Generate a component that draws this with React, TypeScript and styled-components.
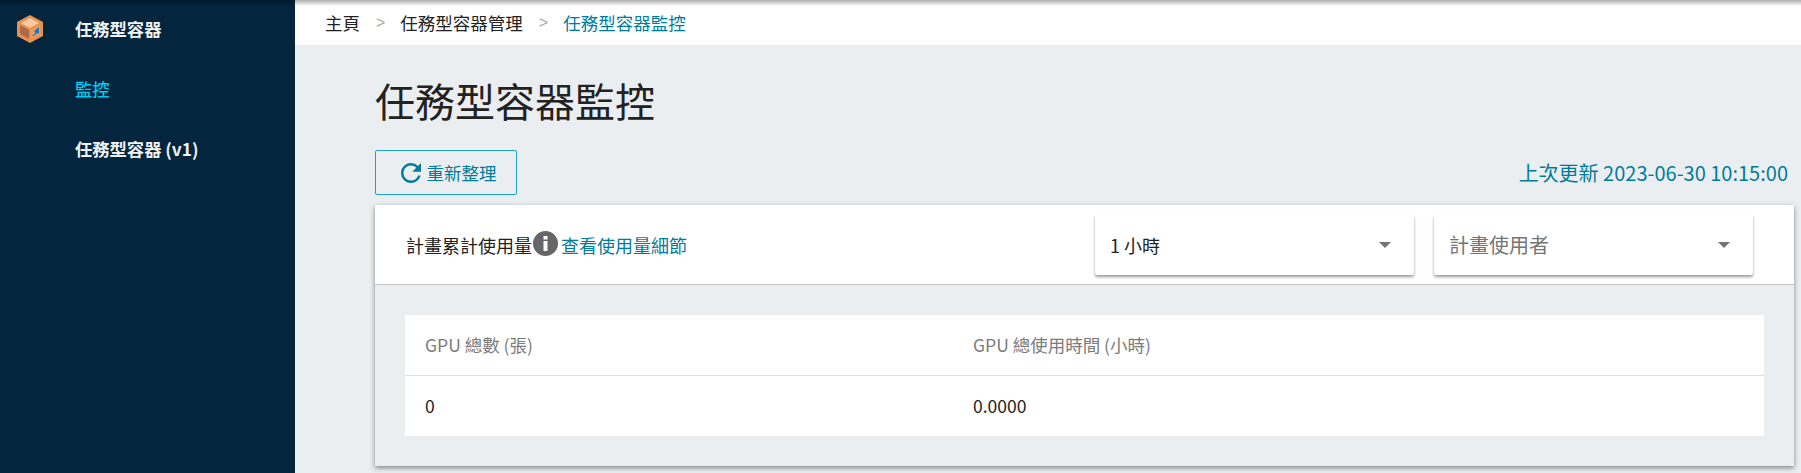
import styled, { createGlobalStyle } from "styled-components";
import { MdRefresh } from "react-icons/md";

const GlobalStyle = createGlobalStyle`
  html, body {
    margin: 0;
    height: 100%;
    overflow: hidden;
    background: #ebeef1;
    font-family: "Noto Sans CJK TC", "Noto Sans", sans-serif;
  }
  * {
    box-sizing: border-box;
  }
`;

const Shell = styled.div`
  position: relative;
  display: flex;
  width: 1801px;
  height: 473px;
  overflow: hidden;
`;

// 頂部陰影
const TopShade = styled.div`
  position: absolute;
  top: 0;
  left: 0;
  right: 0;
  height: 6px;
  background: linear-gradient(rgba(0, 0, 0, 0.32), rgba(0, 0, 0, 0));
`;

const Sidebar = styled.aside`
  flex: none;
  display: grid;
  grid-template-columns: 75px 1fr;
  grid-auto-rows: 60px;
  align-content: start;
  width: 295px;
  padding-top: 4px;
  background: #03253d;
`;

const LogoCell = styled.div`
  grid-row: 1;
  padding: 10px 0 0 16px;
`;

const SideItem = styled.a<{ $active?: boolean }>`
  grid-column: 2;
  line-height: 50px;
  font-size: 17.3px;
  font-weight: ${(p) => (p.$active ? 500 : 700)};
  color: ${(p) => (p.$active ? "#00c8f0" : "#f0f2f4")};
`;

const Main = styled.main`
  flex: 1;
  min-width: 0;
`;

const Breadcrumb = styled.nav`
  display: flex;
  align-items: center;
  height: 45px;
  padding-left: 30px;
  background: #ffffff;
  font-size: 17.5px;
  color: #222222;
`;

const Crumb = styled.span<{ $current?: boolean }>`
  color: ${(p) => (p.$current ? "#007c9b" : "#222222")};
`;

const CrumbSep = styled.span`
  margin: 0 15px 0 16px;
  color: #a5a5a5;
  font-family: "Liberation Sans", sans-serif;
  font-size: 16px;
`;

const Content = styled.div`
  padding: 30px 7px 0 80px;
`;

const Title = styled.h1`
  margin: 0;
  height: 75px;
  font-size: 40px;
  font-weight: 400;
  line-height: 50px;
  color: #222222;
`;

const Toolbar = styled.div`
  display: flex;
  justify-content: space-between;
  align-items: center;
  height: 45px;
  margin-bottom: 10px;
`;

const RefreshButton = styled.button`
  display: flex;
  justify-content: center;
  align-items: center;
  gap: 1px;
  width: 142px;
  height: 45px;
  padding: 0;
  border: 1px solid #1ba3bf;
  border-radius: 2px;
  background: transparent;
  font: inherit;
  font-size: 17.5px;
  color: #007c9b;
`;

const Updated = styled.div`
  padding-right: 6px;
  font-size: 20px;
  color: #007c9b;
`;

const Card = styled.section`
  height: 261px;
  background: #ebeef1;
  box-shadow: 0 2px 5px rgba(0, 0, 0, 0.45);
`;

const CardHead = styled.header`
  display: flex;
  align-items: center;
  height: 80px;
  padding: 0 41px 0 31px;
  background: #ffffff;
  border-bottom: 1px solid #c4c4c4;
  font-size: 18px;
  color: #222222;
`;

const InfoIcon = styled.svg`
  flex: none;
  margin: -3px 3px 0 1px;
`;

const DetailLink = styled.a`
  flex: 1;
  color: #007c9b;
`;

const Select = styled.div<{ $gap?: boolean }>`
  display: flex;
  justify-content: space-between;
  align-items: center;
  width: 319px;
  height: 60px;
  margin-left: ${(p) => (p.$gap ? "20px" : "0")};
  padding: 0 15px;
  border-radius: 2px;
  background: #ffffff;
  box-shadow: 0 2px 3px rgba(0, 0, 0, 0.4);
`;

const SelectText = styled.span<{ $placeholder?: boolean }>`
  font-size: ${(p) => (p.$placeholder ? "20px" : "18px")};
  color: ${(p) => (p.$placeholder ? "#757575" : "#222222")};
`;

const Caret = styled.span`
  width: 0;
  height: 0;
  margin-right: 8px;
  border-left: 6px solid transparent;
  border-right: 6px solid transparent;
  border-top: 6px solid #757575;
`;

const CardBody = styled.div`
  padding: 30px;
`;

const Table = styled.div`
  display: grid;
  grid-template-columns: 548px 1fr;
  background: #ffffff;
`;

const HeadCell = styled.div`
  height: 61px;
  padding: 0 20px;
  border-bottom: 1px solid #dddddd;
  font-size: 17.5px;
  line-height: 59px;
  color: #7b7b7b;
`;

const Cell = styled.div`
  height: 60px;
  padding: 0 20px;
  font-size: 17.5px;
  line-height: 60px;
  color: #222222;
`;

const BoxLogo = () => (
  <svg width="28" height="29" viewBox="0 0 28 29">
    <path d="M14 1 27 8v14l-13 7L1 22V8z" fill="#e8924f" />
    <path d="M14 4 23 9l-9 5-9-5z" fill="#fbc9a0" />
    <path d="M4 11l9 5v9l-9-5z" fill="#a96a45" />
    <path d="M15 16l9-5v9l-9 5z" fill="#ee9d5e" />
    <path d="M16 21l3-1v-3l-2 1 6-5v7l-2-1-3 3-2-1z" fill="#1277d0" />
  </svg>
);

const App = () => (
  <>
    <GlobalStyle />
    <Shell>
      <Sidebar>
        <LogoCell>
          <BoxLogo />
        </LogoCell>
        <SideItem>任務型容器</SideItem>
        <SideItem $active>監控</SideItem>
        <SideItem>任務型容器 (v1)</SideItem>
      </Sidebar>
      <Main>
        <Breadcrumb>
          <Crumb>主頁</Crumb>
          <CrumbSep>&gt;</CrumbSep>
          <Crumb>任務型容器管理</Crumb>
          <CrumbSep>&gt;</CrumbSep>
          <Crumb $current>任務型容器監控</Crumb>
        </Breadcrumb>
        <Content>
          <Title>任務型容器監控</Title>
          <Toolbar>
            <RefreshButton>
              <MdRefresh size={30} />
              重新整理
            </RefreshButton>
            <Updated>上次更新 2023-06-30 10:15:00</Updated>
          </Toolbar>
          <Card>
            <CardHead>
              計畫累計使用量
              <InfoIcon width="25" height="25" viewBox="0 0 25 25">
                <circle cx="12.5" cy="12.5" r="12.5" fill="#666666" />
                <rect x="10.5" y="5" width="4" height="3.5" fill="#ffffff" />
                <rect x="10.5" y="10" width="4" height="10" fill="#ffffff" />
              </InfoIcon>
              <DetailLink>查看使用量細節</DetailLink>
              <Select>
                <SelectText>1 小時</SelectText>
                <Caret />
              </Select>
              <Select $gap>
                <SelectText $placeholder>計畫使用者</SelectText>
                <Caret />
              </Select>
            </CardHead>
            <CardBody>
              <Table>
                <HeadCell>GPU 總數 (張)</HeadCell>
                <HeadCell>GPU 總使用時間 (小時)</HeadCell>
                <Cell>0</Cell>
                <Cell>0.0000</Cell>
              </Table>
            </CardBody>
          </Card>
        </Content>
      </Main>
      <TopShade />
    </Shell>
  </>
);

export default App;
